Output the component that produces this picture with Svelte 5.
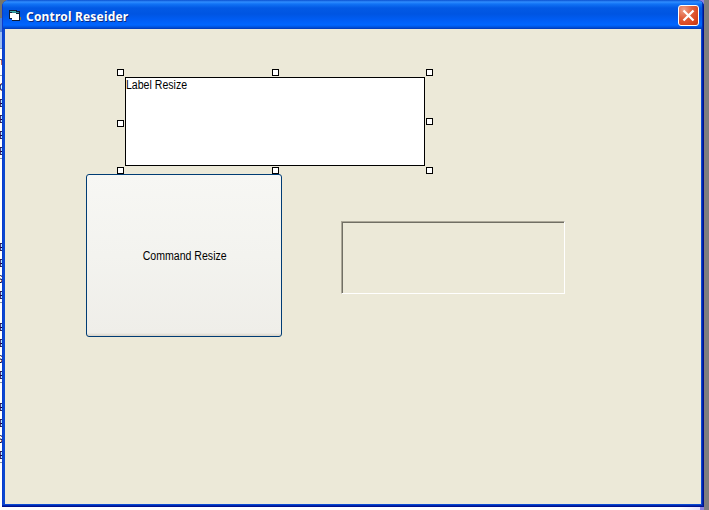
<script>
  // Selection grips around the label, in form coordinates
  const grips = [
    [112, 40], [267, 40], [421, 40],
    [112, 91], [421, 89],
    [112, 138], [267, 138], [421, 138]
  ];
  // Slivers of the text listing behind the window
  const rows = [
    [55, 'n'], [81, 'C'], [97, 'E'], [113, 'E'], [129, 'E'], [145, 'E'],
    [241, 'E'], [257, 'E'], [273, 'S'], [289, 'E'],
    [321, 'E'], [337, 'E'], [353, 'S'], [369, 'E'],
    [401, 'E'], [417, 'E'], [433, 'S'], [449, 'E']
  ];
  const rules = [48, 75, 158, 302, 382, 462];
</script>

<div class="desktop">
  <div class="behind" aria-hidden="true">
    {#each rules as y}<i style="top: {y}px"></i>{/each}
    {#each rows as [y, c]}<span class:right={c === 'n' || c === 'S'} style="top: {y}px">{c}</span>{/each}
  </div>
  <div class="window">
    <header class="titlebar">
      <svg class="appicon" width="14" height="14" viewBox="0 0 14 14" shape-rendering="crispEdges">
        <path d="M1 1h8v1h3v10H4v-2H1z" fill="#0c1c38" />
        <path d="M2 2h6v1H2z" fill="#3cb0b0" />
        <path d="M2 4h6v5H2z" fill="#fff" />
        <path d="M4 3h7v1H4z" fill="#2b8a92" />
        <path d="M4 5h7v6H4z" fill="#fff" />
        <path d="M12 8h1v3h-1z" fill="#8c7a38" />
      </svg>
      <span class="title">Control Reseider</span>
      <button class="close" aria-label="Close">
        <svg width="13" height="13" viewBox="0 0 13 13">
          <path d="M1.5 1.5L11.5 11.5M11.5 1.5L1.5 11.5" stroke="#fff" stroke-width="2.3" />
        </svg>
      </button>
    </header>
    <main class="form">
      <div class="label"><span>Label Resize</span></div>
      <button class="command"><span>Command Resize</span></button>
      <div class="picture"></div>
      {#each grips as [x, y]}<i class="grip" style="left: {x}px; top: {y}px"></i>{/each}
    </main>
  </div>
</div>

<style>
  :global(body) { margin: 0; overflow: hidden; }
  .desktop {
    position: relative;
    box-sizing: border-box;
    width: 709px;
    height: 510px;
    padding-left: 2px;
    overflow: hidden;
    background: linear-gradient(90deg, #fdfdff 0 680px, #e6e0fb 700px, #8f83de 700px 704px, #7e7e7e 704px);
    font-family: "Liberation Sans", Arial, sans-serif;
  }
  .behind {
    position: absolute;
    left: 0;
    top: 0;
    width: 6px;
    height: 510px;
    overflow: hidden;
    background: linear-gradient(#77756a 0 18px, #4e82d8 18px 32px, #9dbdf0 32px 48px, #fff 48px);
  }
  .behind i { position: absolute; left: 0; width: 3px; height: 1px; background: #8997a5; }
  .behind span {
    position: absolute;
    left: -1px;
    font-size: 11px;
    line-height: 12px;
    color: #00003a;
  }
  .behind .right { left: auto; right: 3px; }
  .window {
    position: relative;
    display: flex;
    flex-direction: column;
    box-sizing: border-box;
    width: 702px;
    height: 507px;
    padding: 0 3px 3px;
    border-radius: 7px 7px 0 0;
    background: #0b48cf;
    box-shadow: inset -1px -1px #00128c, inset -2px -2px #0025b0, inset 1px 0 #0a3bd0;
    overflow: hidden;
  }
  .titlebar {
    display: flex;
    align-items: center;
    box-sizing: border-box;
    flex: 0 0 29px;
    margin: 0 -3px;
    padding: 2px 5px 0 6px;
    background: linear-gradient(#0a50d0 0, #2f8dff 2px, #1173f5 4px, #0259e4 8px, #0055e2 14px, #005df4 20px, #0066ff 25px, #0054e0 27px, #0038b4 29px);
    box-shadow: inset 1px 0 #0a3bd0, inset -1px 0 #00128c, inset -2px 0 #0030b8;
  }
  .title {
    flex: 1;
    margin-left: 4px;
    padding-top: 2px;
    font: bold 12px/16px "Noto Sans", "Open Sans", sans-serif;
    letter-spacing: 0.18px;
    color: #fff;
    text-shadow: 1px 1px #0a2a80;
    white-space: nowrap;
  }
  .close {
    display: flex;
    align-items: center;
    justify-content: center;
    box-sizing: border-box;
    width: 21px;
    height: 21px;
    margin: 0;
    padding: 0;
    border: 1px solid #fff;
    border-radius: 3px;
    background: radial-gradient(circle at 25% 20%, #f0a088 0, #e0603c 40%, #d9451d 75%, #bb3510 100%);
  }
  .form { position: relative; flex: 1; background: #ece9d8; }
  .label {
    position: absolute;
    left: 120px;
    top: 48px;
    box-sizing: border-box;
    width: 300px;
    height: 89px;
    border: 1px solid #000;
    background: #fff;
  }
  .label span, .command span {
    display: inline-block;
    font-size: 12px;
    line-height: 14px;
    white-space: nowrap;
    transform: scaleX(0.88);
  }
  .label span { display: block; transform-origin: 0 0; }
  .command {
    position: absolute;
    left: 81px;
    top: 145px;
    box-sizing: border-box;
    width: 196px;
    height: 163px;
    padding: 0 0 0 1px;
    border: 1px solid #003c74;
    border-radius: 3px;
    background: linear-gradient(#f7f7f4, #f3f3ef 50%, #efeee9 98%, #d8d3c8);
    font: 12px "Liberation Sans", Arial, sans-serif;
    color: #000;
  }
  .picture {
    position: absolute;
    left: 336px;
    top: 192px;
    box-sizing: border-box;
    width: 224px;
    height: 73px;
    border: 1px solid;
    border-color: #aca899 #fff #fff #aca899;
    box-shadow: inset 1px 1px #716f64;
  }
  .grip {
    position: absolute;
    box-sizing: border-box;
    width: 7px;
    height: 7px;
    border: 1px solid #000;
    background: #fff;
  }
</style>
